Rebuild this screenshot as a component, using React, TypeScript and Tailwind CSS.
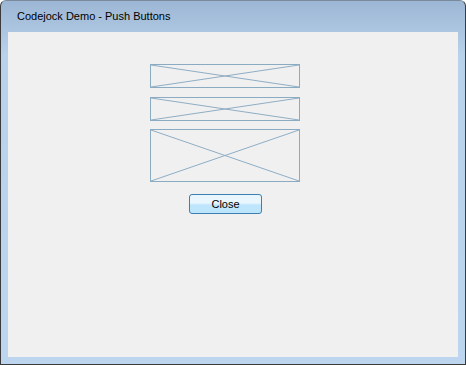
import React from "react";

const font = "font-['Liberation_Sans','Arial',sans-serif]";

const Placeholder = ({ height }: { height: string }) => (
  <div className={`w-[150px] ${height} border border-[#8babc3] bg-[#f0f0f0]`}>
    <svg className="block h-full w-full" viewBox="0 0 100 100" preserveAspectRatio="none">
      <line x1="0" y1="0" x2="100" y2="100" stroke="#8eadc4" strokeWidth="1" vectorEffect="non-scaling-stroke" />
      <line x1="0" y1="100" x2="100" y2="0" stroke="#8eadc4" strokeWidth="1" vectorEffect="non-scaling-stroke" />
    </svg>
  </div>
);

export default function App() {
  return (
    <div className="h-[365px] w-[466px] bg-white">
      <div className="flex h-full w-full flex-col rounded-t-[6px] border border-[#3b3b3b] border-t-[#7a8a9a] bg-gradient-to-b from-[#9cb7d5] via-[#b9d1ea] via-[15%] to-[#bdd5ee]">
        <div className={`flex h-[31px] items-center pl-[16px] text-[11px] text-black ${font}`}>
          Codejock Demo - Push Buttons
        </div>
        <div className="mx-[7px] mb-[7px] flex flex-1 flex-col bg-[#f0f0f0] pl-[142px] pt-[32px]">
          <Placeholder height="h-[24px]" />
          <div className="h-[9px]" />
          <Placeholder height="h-[24px]" />
          <div className="h-[8px]" />
          <Placeholder height="h-[53px]" />
          <button
            className={`ml-[39px] mt-[12px] flex h-[20px] w-[73px] items-center justify-center rounded-[3px] border border-[#3c7fb1] bg-gradient-to-b from-[#eaf6fd] from-[45%] to-[#bde6fd] to-[55%] text-[11px] text-black ${font}`}
          >
            Close
          </button>
        </div>
      </div>
    </div>
  );
}
